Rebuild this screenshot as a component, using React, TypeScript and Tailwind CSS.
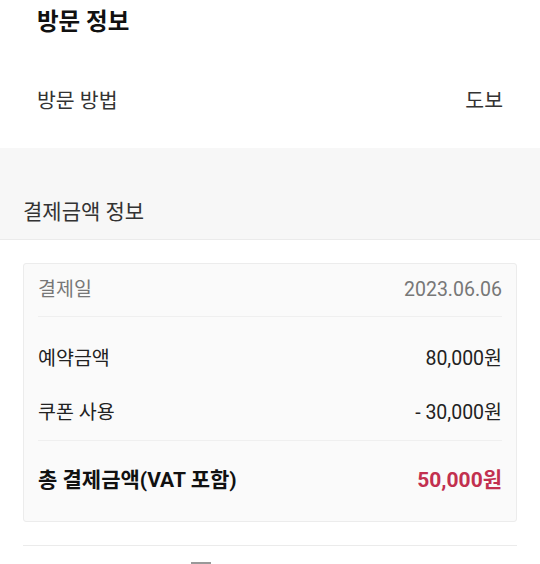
import React from "react";

const font = { fontFamily: 'Roboto, "Noto Sans CJK KR", sans-serif' };

export default function App() {
  return (
    <div className="w-[540px] h-[564px] overflow-hidden bg-white" style={font}>
      <div className="px-[37px]">
        <div className="h-[46px] flex items-center text-[23.5px] font-bold text-[#111]">방문 정보</div>
        <div className="h-[102px] pt-[9px] flex items-center justify-between text-[20.5px] text-[#333]">
          <span>방문 방법</span>
          <span>도보</span>
        </div>
      </div>
      <div className="h-[92px] bg-[#f7f7f7] border-b border-[#ebebeb] pl-[23px] pt-[50px]">
        <div className="text-[21px] leading-[28px] text-[#333]">결제금액 정보</div>
      </div>
      <div className="mx-[23px] mt-[23px] border border-[#ececec] rounded-[3px] bg-[#fafafa] px-[14px]">
        <div className="h-[53px] flex items-center justify-between text-[19.5px] text-[#777] border-b border-[#efefef]">
          <span>결제일</span>
          <span>2023.06.06</span>
        </div>
        <div className="pt-[15px] pb-[0px] border-b border-[#efefef]">
          <div className="h-[54px] flex items-center justify-between text-[19.5px] text-[#222]">
            <span>예약금액</span>
            <span>80,000원</span>
          </div>
          <div className="h-[54px] flex items-center justify-between text-[19.5px] text-[#222]">
            <span>쿠폰 사용</span>
            <span>- 30,000원</span>
          </div>
        </div>
        <div className="h-[80px] flex items-center justify-between text-[21px] font-bold">
          <span className="text-[#111]">총 결제금액(VAT 포함)</span>
          <span className="text-[#c2304f]">50,000원</span>
        </div>
      </div>
      <div className="mx-[23px] mt-[23px] border-t border-[#ebebeb]" />
      <div className="ml-[191px] mt-[16px] w-[20px] h-[3px] bg-[#999]" />
    </div>
  );
}
